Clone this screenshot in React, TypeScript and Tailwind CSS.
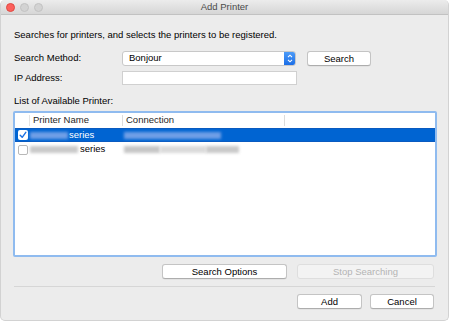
import React from "react";

function Btn({ label, w, disabled }: { label: string; w: string; disabled?: boolean }) {
  return (
    <div
      className={
        "h-[15px] flex items-center justify-center rounded-[3px] border text-[9.5px] leading-none " +
        w +
        (disabled
          ? " bg-[#f3f3f3] border-[#dedede] text-[#b4b4b4]"
          : " bg-white border-[#c4c4c4] border-b-[#adadad] text-black shadow-[0_0.5px_0.5px_rgba(0,0,0,0.08)]")
      }
    >
      {label}
    </div>
  );
}

function Blur({ w, color, ml }: { w: string; color: string; ml?: string }) {
  return <div className={"h-[7px] blur-[1.5px] " + w + " " + color + " " + (ml || "")} />;
}

export default function App() {
  return (
    <div className="w-[449px] h-[322px] bg-white font-['Liberation_Sans',Arial,sans-serif]">
      <div className="w-[449px] h-[321px] rounded-[5px] overflow-hidden bg-[#ececec] flex flex-col border border-t-0 border-[#d2d2d2]">
        {/* title bar */}
        <div className="h-[15px] shrink-0 bg-gradient-to-b from-[#ececec] to-[#d6d6d6] border-b border-[#c2c2c2] flex items-center relative">
          <div className="flex items-center gap-[5px] pl-[5px]">
            <div className="w-[9px] h-[9px] rounded-full bg-[#fc605c] border-[0.5px] border-[#de4a42]" />
            <div className="w-[9px] h-[9px] rounded-full bg-[#d3d3d3] border-[0.5px] border-[#c2c2c2]" />
            <div className="w-[9px] h-[9px] rounded-full bg-[#d3d3d3] border-[0.5px] border-[#c2c2c2]" />
          </div>
          <div className="absolute inset-0 flex items-center justify-center text-[9.5px] text-[#4a4a4a] leading-none">
            Add Printer
          </div>
        </div>

        <div className="flex flex-col pl-[13px] pr-[13px] text-[9.5px] text-black">
          <div className="mt-[14px] h-[12px] leading-[12px]">
            Searches for printers, and selects the printers to be registered.
          </div>

          {/* search method */}
          <div className="mt-[10px] h-[15px] flex items-center">
            <div className="w-[108px]">Search Method:</div>
            <div className="w-[174px] h-[15px] flex bg-white border border-[#c8c8c8] rounded-[3px] overflow-hidden">
              <div className="flex-1 flex items-center pl-[6px]">Bonjour</div>
              <div className="w-[11px] h-full bg-gradient-to-b from-[#4c9bf8] to-[#1b6ee6] flex items-center justify-center">
                <svg width="6" height="9" viewBox="0 0 6 9">
                  <path d="M1 3.2 L3 1.2 L5 3.2 M1 5.8 L3 7.8 L5 5.8" stroke="white" strokeWidth="1.1" fill="none" />
                </svg>
              </div>
            </div>
            <div className="ml-[11px]">
              <Btn label="Search" w="w-[64px]" />
            </div>
          </div>

          {/* ip */}
          <div className="mt-[5px] h-[14px] flex items-center">
            <div className="w-[108px]">IP Address:</div>
            <div className="w-[175px] h-[14px] bg-white border border-[#d0d0d0]" />
          </div>

          <div className="mt-[10px] h-[12px] leading-[12px]">List of Available Printer:</div>

          {/* list */}
          <div className="mt-[4px] -ml-[1px] w-[424px] h-[146px] border-[2px] border-[#8fbbef] rounded-[2px] bg-white flex flex-col">
            <div className="h-[15px] flex items-center text-[#262626] shrink-0">
              <div className="w-[14px]" />
              <div className="w-[1px] h-[11px] bg-[#e4e4e4]" />
              <div className="w-[92px] pl-[3px]">Printer Name</div>
              <div className="w-[1px] h-[11px] bg-[#dcdcdc]" />
              <div className="w-[161px] pl-[3px]">Connection</div>
              <div className="w-[1px] h-[11px] bg-[#dcdcdc]" />
            </div>
            <div className="h-[14px] bg-[#0064d2] border-y border-[#0a5bc0] flex items-center text-white shrink-0">
              <div className="w-[15px] flex justify-center">
                <div className="w-[10px] h-[10px] bg-white rounded-[2px] flex items-center justify-center">
                  <svg width="8" height="8" viewBox="0 0 8 8">
                    <path d="M1.2 4.2 L3.2 6.3 L6.8 1.3" stroke="#1a6fe3" strokeWidth="1.4" fill="none" strokeLinecap="round" strokeLinejoin="round" />
                  </svg>
                </div>
              </div>
              <div className="w-[93px] flex items-center">
                <Blur w="w-[38px]" color="bg-[#6f9fe6]" />
                <span className="ml-[1px]">series</span>
              </div>
              <div className="w-[162px] flex items-center pl-[1px]">
                <Blur w="w-[97px]" color="bg-[#6f9fe6]" />
              </div>
            </div>
            <div className="h-[15px] flex items-center shrink-0">
              <div className="w-[15px] flex justify-center">
                <div className="w-[10px] h-[10px] bg-white rounded-[2px] border border-[#b8b8b8]" />
              </div>
              <div className="w-[93px] flex items-center">
                <Blur w="w-[48px]" color="bg-[#c9c9c9]" />
                <span className="ml-[2px]">series</span>
              </div>
              <div className="w-[162px] flex items-center pl-[1px]">
                <Blur w="w-[36px]" color="bg-[#c6c6c6]" />
                <Blur w="w-[46px]" color="bg-[#dadada]" />
                <Blur w="w-[33px]" color="bg-[#c9c9c9]" />
              </div>
            </div>
          </div>

          {/* bottom buttons */}
          <div className="mt-[7px] flex justify-end gap-[10px] pr-[1px]">
            <Btn label="Search Options" w="w-[125px]" />
            <Btn label="Stop Searching" w="w-[137px]" disabled />
          </div>

          <div className="mt-[7px] h-[1px] bg-[#d6d6d6]" />

          <div className="mt-[7px] flex justify-end gap-[8px] pr-[1px]">
            <Btn label="Add" w="w-[65px]" />
            <Btn label="Cancel" w="w-[64px]" />
          </div>
        </div>
      </div>
    </div>
  );
}
